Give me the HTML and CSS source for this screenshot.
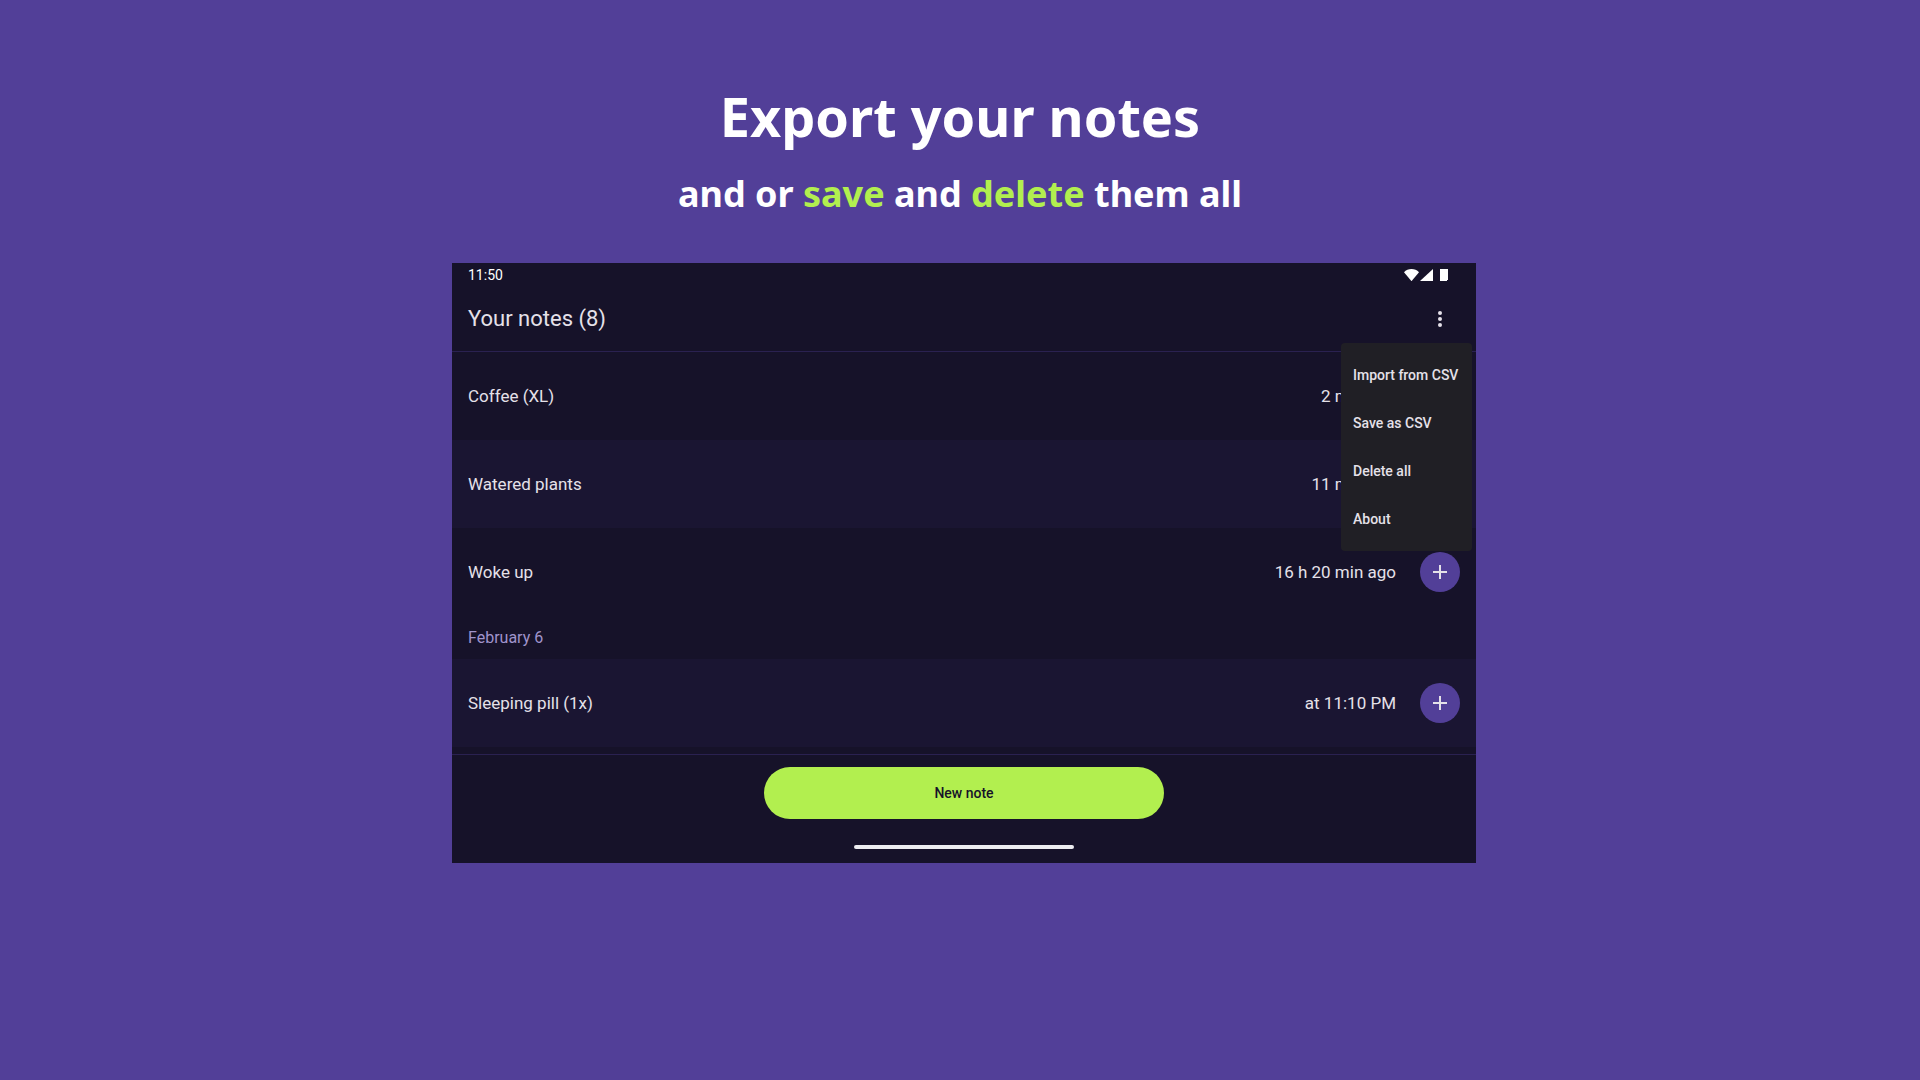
FILE: index.html
```html
<!DOCTYPE html>
<html lang="en">
<head>
  <meta charset="utf-8">
  <meta name="viewport" content="width=device-width, initial-scale=1">
  <title>Export your notes</title>
  <link rel="stylesheet" href="styles.css">
</head>
<body>
  <main class="promo">
    <header class="promo-header">
      <h1 class="promo-title">Export your notes</h1>
      <p class="promo-subtitle">and or <em>save</em> and <em>delete</em> them all</p>
    </header>

    <section class="device" aria-label="Your notes">
      <div class="status-bar">
        <span class="status-time">11:50</span>
        <span class="status-icons">
          <svg class="status-icon" width="15" height="12" viewBox="0 0 15 12" aria-hidden="true"><path d="M7.500 12.200L0 3.200C2 1.200 4.600 0 7.500 0S13 1.200 15 3.200z"/></svg>
          <svg class="status-icon" width="13" height="12" viewBox="0 0 13 12" aria-hidden="true"><path d="M0 12L13 0v12z"/></svg>
          <svg class="status-icon battery" width="8" height="12" viewBox="0 0 8 12" aria-hidden="true"><path d="M0 0h8v11H7v1H0z"/></svg>
        </span>
      </div>

      <div class="app-bar">
        <h2 class="app-title">Your notes (8)</h2>
        <div class="menu-anchor">
          <button class="more-button" type="button" aria-label="More options" aria-expanded="true">
            <svg width="24" height="24" viewBox="0 0 24 24" aria-hidden="true"><circle cx="12" cy="6" r="2"/><circle cx="12" cy="12" r="2"/><circle cx="12" cy="18" r="2"/></svg>
          </button>
          <div class="menu" role="menu">
            <button class="menu-item" type="button" role="menuitem">Import from CSV</button>
            <button class="menu-item" type="button" role="menuitem">Save as CSV</button>
            <button class="menu-item" type="button" role="menuitem">Delete all</button>
            <button class="menu-item" type="button" role="menuitem">About</button>
          </div>
        </div>
      </div>

      <div class="notes">
        <ul class="note-list">
          <li class="note">
            <span class="note-name">Coffee (XL)</span>
            <time class="note-time">2 min ago</time>
            <button class="add-button" type="button" aria-label="Add Coffee (XL)"><svg width="14" height="14" viewBox="0 0 14 14" aria-hidden="true"><path d="M6 0h2v6h6v2H8v6H6V8H0V6h6z"/></svg></button>
          </li>
          <li class="note note-alt">
            <span class="note-name">Watered plants</span>
            <time class="note-time">11 min ago</time>
            <button class="add-button" type="button" aria-label="Add Watered plants"><svg width="14" height="14" viewBox="0 0 14 14" aria-hidden="true"><path d="M6 0h2v6h6v2H8v6H6V8H0V6h6z"/></svg></button>
          </li>
          <li class="note">
            <span class="note-name">Woke up</span>
            <time class="note-time">16 h 20 min ago</time>
            <button class="add-button" type="button" aria-label="Add Woke up"><svg width="14" height="14" viewBox="0 0 14 14" aria-hidden="true"><path d="M6 0h2v6h6v2H8v6H6V8H0V6h6z"/></svg></button>
          </li>
        </ul>
        <h3 class="day">February 6</h3>
        <ul class="note-list">
          <li class="note note-alt">
            <span class="note-name">Sleeping pill (1x)</span>
            <time class="note-time">at 11:10 PM</time>
            <button class="add-button" type="button" aria-label="Add Sleeping pill (1x)"><svg width="14" height="14" viewBox="0 0 14 14" aria-hidden="true"><path d="M6 0h2v6h6v2H8v6H6V8H0V6h6z"/></svg></button>
          </li>
        </ul>
      </div>

      <footer class="actions">
        <button class="new-note" type="button">New note</button>
        <div class="home-indicator"></div>
      </footer>
    </section>
  </main>
</body>
</html>
```
FILE: styles.css
```css
* {
  box-sizing: border-box;
  margin: 0;
  padding: 0;
}

body {
  min-height: 100vh;
  background: #523f98;
  font-family: Roboto, "Noto Sans", sans-serif;
}

button {
  border: 0;
  font: inherit;
  cursor: pointer;
}

.promo {
  display: flex;
  flex-direction: column;
  align-items: center;
  gap: 39px;
  padding: 76px 0 40px 8px;
}

.promo-header {
  margin-right: 8px;
  color: #fff;
  font-family: "Noto Sans", sans-serif;
  text-align: center;
}

.promo-title {
  font-size: 54px;
  font-weight: 700;
  line-height: 80px;
}

.promo-subtitle {
  margin-top: 8px;
  font-size: 36px;
  font-weight: 700;
  line-height: 60px;
}

.promo-subtitle em {
  color: #b2ef4f;
  font-style: normal;
}

.device {
  width: 100%;
  max-width: 1024px;
  background: #161229;
  color: #e5e1e9;
}

.status-bar {
  display: flex;
  align-items: center;
  justify-content: space-between;
  height: 24px;
  padding: 0 28px 0 16px;
  color: #fff;
  font-size: 14px;
}

.status-icons {
  display: flex;
  gap: 1px;
}

.status-icon {
  fill: #fff;
}

.battery {
  margin-left: 6px;
}

.app-bar {
  display: flex;
  align-items: center;
  justify-content: space-between;
  height: 65px;
  padding: 0 12px 0 16px;
  border-bottom: 1px solid #2a2150;
}

.app-title {
  font-size: 22px;
  font-weight: 400;
  line-height: 28px;
}

.menu-anchor {
  position: relative;
}

.more-button {
  display: grid;
  place-items: center;
  width: 48px;
  height: 48px;
  background: none;
  fill: #e5e1e9;
}

.menu {
  position: absolute;
  top: 100%;
  right: -8px;
  z-index: 1;
  min-width: 131px;
  padding: 8px 0;
  border-radius: 4px;
  background: #201f25;
}

.menu-item {
  display: block;
  width: 100%;
  height: 48px;
  padding: 0 12px;
  background: none;
  color: #e5e1e9;
  font-size: 14px;
  font-weight: 500;
  text-align: left;
  white-space: nowrap;
}

.note-list {
  list-style: none;
}

.note {
  display: flex;
  align-items: center;
  height: 88px;
  padding: 0 16px;
  font-size: 17px;
  line-height: 24px;
}

.note-alt {
  background: #1a1532;
}

.note-name {
  flex: 1;
}

.add-button {
  display: grid;
  place-items: center;
  width: 40px;
  height: 40px;
  margin-left: 24px;
  border-radius: 50%;
  background: #523f98;
  fill: #e5e1e9;
}

.day {
  padding: 10px 16px 9px;
  color: #a094cc;
  font-size: 16px;
  font-weight: 400;
  line-height: 24px;
}

.notes {
  padding-bottom: 7px;
}

.actions {
  display: flex;
  flex-direction: column;
  align-items: center;
  gap: 26px;
  padding: 12px 16px 14px;
  border-top: 1px solid #2a2150;
}

.new-note {
  width: 100%;
  max-width: 400px;
  height: 52px;
  border-radius: 26px;
  background: #b2ef4f;
  color: #161229;
  font-size: 14px;
  font-weight: 500;
}

.home-indicator {
  width: 220px;
  height: 4px;
  border-radius: 2px;
  background: #ededf0;
}
```
